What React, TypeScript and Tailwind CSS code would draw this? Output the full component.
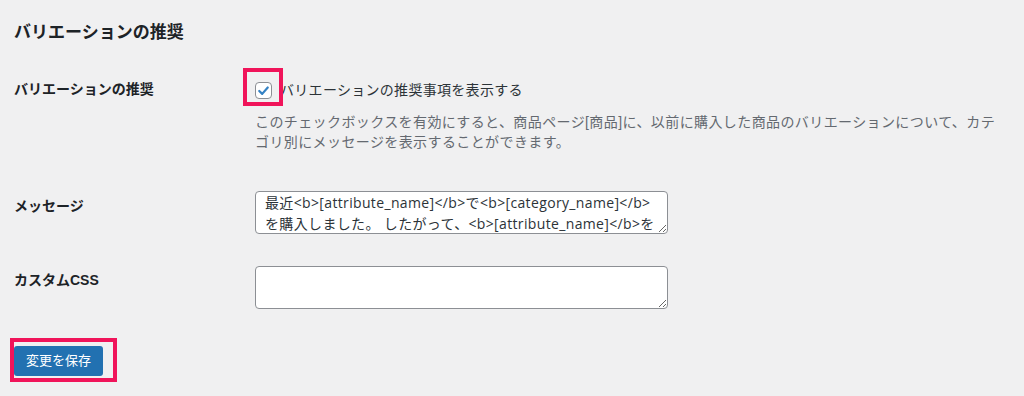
import React, { useState } from "react";

const font = {
  fontFamily: '"Liberation Sans", "Noto Sans CJK JP", sans-serif',
};

const areaFont = {
  fontFamily: '"Open Sans", "Noto Sans CJK JP", sans-serif',
};

const App = () => {
  const [checked, setChecked] = useState<boolean>(true);
  const [message, setMessage] = useState<string>(
    "最近<b>[attribute_name]</b>で<b>[category_name]</b>を購入しました。 したがって、<b>[attribute_name]</b>をお勧めします。"
  );
  const [css, setCss] = useState<string>("");

  return (
    <div
      className="min-h-[396px] w-[1024px] bg-[#f0f0f1] pl-[14px] pt-[20px] text-[#1d2327]"
      style={font}
    >
      {/* section title */}
      <h2 className="text-[17px] font-bold leading-[26px]">バリエーションの推奨</h2>

      {/* settings table */}
      <div className="mt-[33px] grid grid-cols-[241px_1fr]">
        <div className="text-[14px] font-bold leading-[20px]">バリエーションの推奨</div>
        <div>
          <label className="flex h-[22px] items-center text-[14px] tracking-[0.3px] text-[#2c3338]">
            <span className="relative mr-[8px] flex">
              <input
                type="checkbox"
                checked={checked}
                onChange={(e) => setChecked(e.target.checked)}
                className="peer h-[17px] w-[17px] appearance-none rounded-[4px] border border-[#8c8f94] bg-white"
              />
              <svg
                viewBox="0 0 20 20"
                className="pointer-events-none absolute left-[0px] top-[0px] hidden h-[17px] w-[17px] peer-checked:block"
              >
                <path
                  d="M5 10.5 L8.5 14 L15 6.5"
                  fill="none"
                  stroke="#3582c4"
                  strokeWidth="2.6"
                  strokeLinecap="round"
                  strokeLinejoin="round"
                />
              </svg>
              {/* highlight */}
              <span className="pointer-events-none absolute left-[-12px] top-[-14px] h-[38px] w-[40px] border-[4px] border-[#f0145a]" />
            </span>
            バリエーションの推奨事項を表示する
          </label>
          <p className="mt-[11px] text-[14px] leading-[20px] tracking-[0.4px] text-[#646970]">
            このチェックボックスを有効にすると、商品ページ[商品]に、以前に購入した商品のバリエーションについて、カテ
            <br />
            ゴリ別にメッセージを表示することができます。
          </p>
        </div>

        <div className="mt-[44px] text-[14px] font-bold leading-[20px]">メッセージ</div>
        <div className="mt-[39px]">
          <textarea
            value={message}
            onChange={(e) => setMessage(e.target.value)}
            className="block h-[43px] w-[413px] resize-y overflow-hidden rounded-[4px] border border-[#8c8f94] bg-white pl-[9px] pr-[9px] pt-0 text-[14px] leading-[21px] tracking-[0.35px] text-[#2c3338] outline-none"
            style={areaFont}
          />
        </div>

        <div className="mt-[36px] text-[14px] font-bold leading-[20px]">カスタムCSS</div>
        <div className="mt-[32px]">
          <textarea
            value={css}
            onChange={(e) => setCss(e.target.value)}
            className="block h-[43px] w-[413px] resize-y rounded-[4px] border border-[#8c8f94] bg-white px-[9px] text-[14px] leading-[21px] outline-none"
            style={areaFont}
          />
        </div>
      </div>

      {/* save */}
      <div className="ml-[-4px] mt-[29px] inline-flex border-[4px] border-[#f0145a] pb-[2px] pl-0 pr-[10px] pt-[4px]">
        <button
          type="button"
          className="h-[30px] rounded-[3px] bg-[#2271b1] px-[12px] text-[13px] text-white"
        >
          変更を保存
        </button>
      </div>
    </div>
  );
};

export default App;
